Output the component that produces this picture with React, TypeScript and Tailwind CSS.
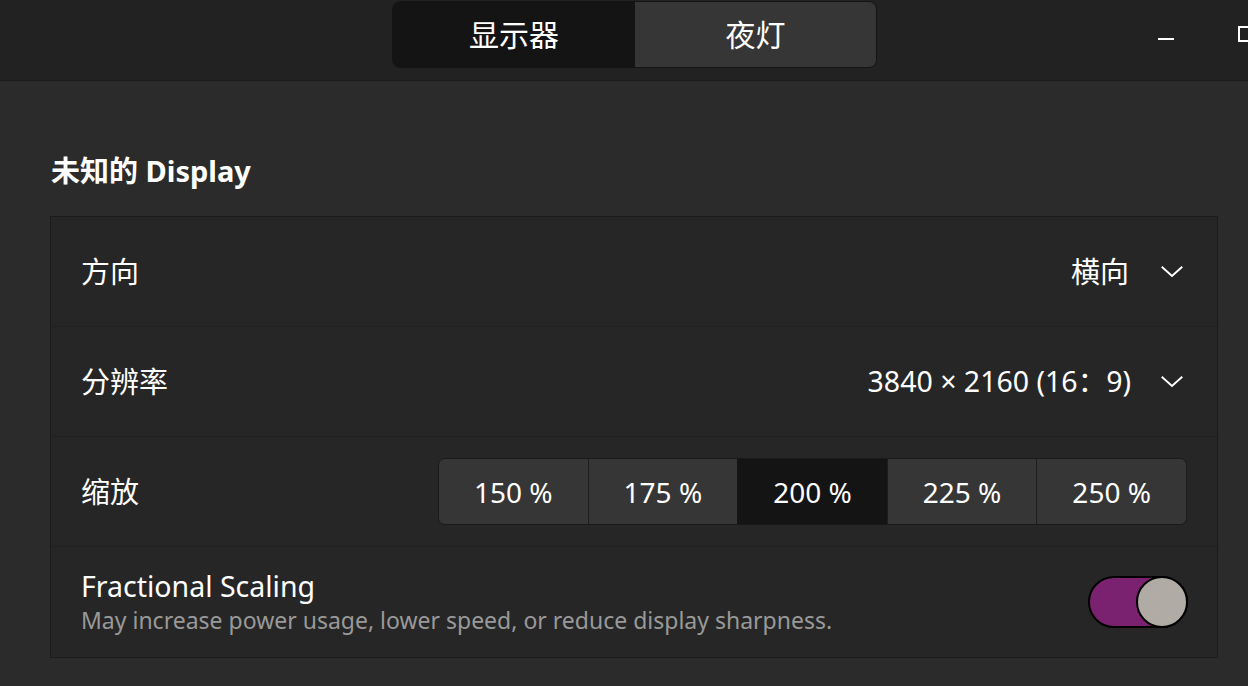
import React from "react";

const FONT = { fontFamily: '"Noto Sans", "Noto Sans CJK SC", sans-serif' };

function Chevron() {
  return (
    <svg width="22" height="12" viewBox="0 0 22 12" fill="none" className="block">
      <path d="M1.5 1.5 L11 10 L20.5 1.5" stroke="#ffffff" strokeWidth="2" strokeLinecap="square" strokeLinejoin="miter" />
    </svg>
  );
}

export default function App() {
  const scales = ["150 %", "175 %", "200 %", "225 %", "250 %"];
  return (
    <div className="w-[1248px] h-[686px] overflow-hidden bg-[#2b2b2b] text-white flex flex-col" style={FONT}>
      {/* header bar */}
      <div className="h-[81px] shrink-0 bg-[#222222] border-b border-[#1a1a1a] flex items-start overflow-hidden">
        <div className="w-[392px] shrink-0" />
        <div className="mt-[1px] w-[485px] h-[67px] shrink-0 flex rounded-[8px] border border-[#141414] overflow-hidden">
          <div className="w-[242px] h-full bg-[#141414] flex items-center justify-center text-[30px]">显示器</div>
          <div className="flex-1 h-full bg-[#363636] flex items-center justify-center text-[30px]">夜灯</div>
        </div>
        <div className="w-[281px] shrink-0" />
        <div className="mt-[38px] w-[16px] h-[2px] bg-white shrink-0" />
        <div className="w-[64px] shrink-0" />
        <div className="mt-[26px] w-[18px] h-[16px] border-2 border-white shrink-0" />
      </div>

      {/* content */}
      <div className="flex-1 pl-[50px] pt-[70px]">
        <div className="h-[40px] leading-[40px] text-[29px] font-bold pl-[1px]">未知的 Display</div>
        <div className="mt-[25px] w-[1168px] bg-[#262626] border border-[#1b1b1b] flex flex-col divide-y divide-[#212121]">
          {/* 方向 */}
          <div className="h-[110px] flex items-center pl-[30px] pr-[34px]">
            <span className="text-[29px] leading-none">方向</span>
            <span className="ml-auto text-[29px] leading-none">横向</span>
            <span className="ml-[32px]"><Chevron /></span>
          </div>
          {/* 分辨率 */}
          <div className="h-[110px] flex items-center pl-[30px] pr-[34px]">
            <span className="text-[29px] leading-none">分辨率</span>
            <span className="ml-auto text-[28.5px] leading-none">3840 × 2160 (16：9)</span>
            <span className="ml-[30px]"><Chevron /></span>
          </div>
          {/* 缩放 */}
          <div className="h-[110px] flex items-center pl-[30px] pr-[30px]">
            <span className="text-[29px] leading-none">缩放</span>
            <div className="ml-auto w-[749px] h-[67px] flex rounded-[7px] border border-[#1a1a1a] overflow-hidden">
              {scales.map((s, i) => (
                <div
                  key={s}
                  className={
                    "flex-1 flex items-center justify-center text-[28px] " +
                    (i === 2 ? "bg-[#141414] " : "bg-[#363636] ") +
                    (i === 0 ? "" : i === 2 ? "border-l border-[#141414]" : "border-l border-[#1e1e1e]")
                  }
                >
                  {s}
                </div>
              ))}
            </div>
          </div>
          {/* Fractional scaling */}
          <div className="h-[110px] flex items-center pl-[30px] pr-[29px]">
            <div className="flex flex-col">
              <span className="text-[28.5px] leading-[36px]">Fractional Scaling</span>
              <span className="text-[23px] leading-[32px] text-[#999999]">
                May increase power usage, lower speed, or reduce display sharpness.
              </span>
            </div>
            <div className="ml-auto relative w-[100px] h-[52px] rounded-full bg-[#7a216f] border-2 border-black">
              <div className="absolute right-[-2px] top-[-2px] w-[52px] h-[52px] rounded-full bg-[#b1aba6] border-2 border-black" />
            </div>
          </div>
        </div>
      </div>
    </div>
  );
}
